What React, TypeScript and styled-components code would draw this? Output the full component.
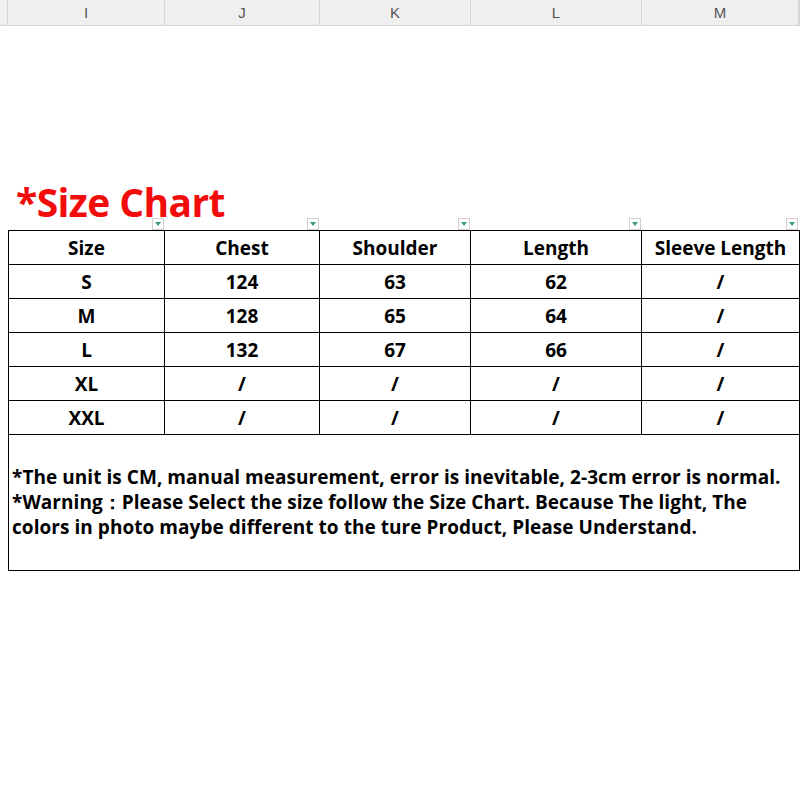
import styled, { createGlobalStyle } from "styled-components";

const GlobalStyle = createGlobalStyle`
  html, body {
    margin: 0;
    padding: 0;
    background: #ffffff;
  }
  body {
    font-family: "Open Sans", "Noto Sans", sans-serif;
    color: #000;
  }
`;

const COLS = "157px 155px 151px 171px 157px";

const Page = styled.div`
  width: 800px;
  height: 800px;
  background: #fff;
  overflow: hidden;
`;

const HeaderBar = styled.div`
  display: grid;
  grid-template-columns: 8px ${COLS} 1fr;
  height: 26px;
  background: #efefef;
  border-bottom: 1px solid #d6d6d6;
  box-sizing: border-box;
`;

const HeaderCell = styled.div`
  display: flex;
  align-items: center;
  justify-content: center;
  border-right: 1px solid #d6d6d6;
  font-family: "Liberation Sans", sans-serif;
  font-size: 15px;
  color: #555;
`;

const Sheet = styled.div`
  padding: 156px 0 0 8px;
`;

const Title = styled.div`
  font-family: "Open Sans", sans-serif;
  font-weight: 700;
  font-size: 39px;
  line-height: 40px;
  height: 40px;
  color: #f20d0d;
  padding-left: 8px;
  letter-spacing: -0.6px;
`;

const FilterRow = styled.div`
  display: grid;
  grid-template-columns: ${COLS};
  height: 14px;
  margin-top: -6px;
`;

const FilterSlot = styled.div`
  display: flex;
  justify-content: flex-end;
  align-items: flex-end;
  padding-right: 1px;
`;

const FilterButton = styled.div`
  width: 12px;
  height: 12px;
  box-sizing: border-box;
  border: 1px solid #d0d0d0;
  background: #fff;
  display: flex;
  align-items: center;
  justify-content: center;
`;

const Table = styled.div`
  width: 792px;
  border: 1px solid #000;
  box-sizing: border-box;
`;

const Row = styled.div`
  display: grid;
  grid-template-columns: 156px 155px 151px 171px 157px;
  height: 34px;
  border-bottom: 1px solid #000;
  box-sizing: border-box;
`;

const Cell = styled.div`
  display: flex;
  align-items: center;
  justify-content: center;
  border-right: 1px solid #000;
  font-family: "Open Sans", sans-serif;
  font-weight: 700;
  font-size: 19px;
  &:last-child {
    border-right: none;
  }
`;

const Notes = styled.div`
  height: 135px;
  display: flex;
  flex-direction: column;
  justify-content: center;
  padding: 0 0 0 3px;
  font-family: "Open Sans", sans-serif;
  font-weight: 700;
  font-size: 19px;
  line-height: 25px;
  letter-spacing: 0.05px;
  white-space: nowrap;
`;

const header = ["Size", "Chest", "Shoulder", "Length", "Sleeve Length"];
const rows = [
  ["S", "124", "63", "62", "/"],
  ["M", "128", "65", "64", "/"],
  ["L", "132", "67", "66", "/"],
  ["XL", "/", "/", "/", "/"],
  ["XXL", "/", "/", "/", "/"],
];

const Arrow = () => (
  <svg width="8" height="6" viewBox="0 0 8 6">
    <path d="M1 1 L7 1 L4 5 Z" fill="#3a9a72" />
  </svg>
);

export default function App() {
  return (
    <Page>
      <GlobalStyle />
      <HeaderBar>
        <HeaderCell />
        {["I", "J", "K", "L", "M"].map((c) => (
          <HeaderCell key={c}>{c}</HeaderCell>
        ))}
        <HeaderCell />
      </HeaderBar>
      <Sheet>
        <Title>*Size Chart</Title>
        <FilterRow>
          {header.map((h) => (
            <FilterSlot key={h}>
              <FilterButton>
                <Arrow />
              </FilterButton>
            </FilterSlot>
          ))}
        </FilterRow>
        <Table>
          {[header, ...rows].map((r, i) => (
            <Row key={i}>
              {r.map((v, j) => (
                <Cell key={j}>{v}</Cell>
              ))}
            </Row>
          ))}
          <Notes>
            <div>*The unit is CM, manual measurement, error is inevitable, 2-3cm error is normal.</div>
            <div>*Warning：Please Select the size follow the Size Chart. Because The light, The</div>
            <div>colors in photo maybe different to the ture Product, Please Understand.</div>
          </Notes>
        </Table>
      </Sheet>
    </Page>
  );
}
